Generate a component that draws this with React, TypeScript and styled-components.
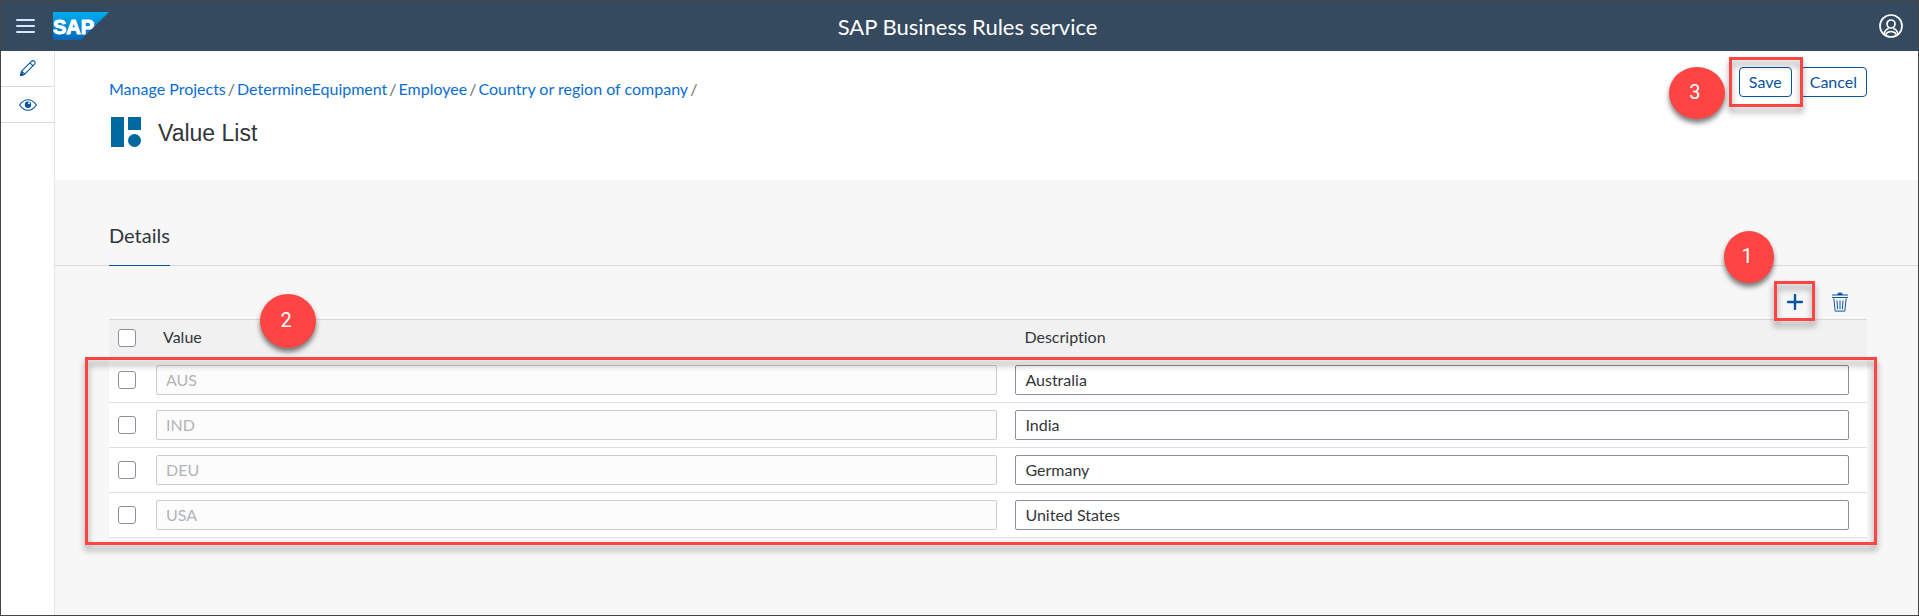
import React, { useState } from "react";
import styled, { createGlobalStyle } from "styled-components";

const GlobalStyle = createGlobalStyle`
  *, *::before, *::after { box-sizing: border-box; }
  body {
    margin: 0;
    font-family: Lato, "Liberation Sans", sans-serif;
    font-size: 16px;
    font-variant-ligatures: none;
    color: #32363a;
    background: #f7f7f7;
  }
  button, input { font: inherit; color: inherit; }
`;

const Frame = styled.div`
  display: flex;
  flex-direction: column;
  min-height: 100vh;
  border: 1px solid #444;
`;

const ShellBar = styled.header`
  display: grid;
  grid-template-columns: 1fr auto 1fr;
  align-items: center;
  height: 50px;
  padding: 0 14px;
  background: #354a5f;
  color: #fff;
`;

const ShellStart = styled.div`
  display: flex;
  align-items: center;
  gap: 16px;
`;

const ShellTitle = styled.h1`
  margin: 0;
  padding: 2px 0 0 16px;
  font-size: 22px;
  line-height: 24px;
  font-weight: 400;
`;

const IconButton = styled.button<{ $width: number; $height: number }>`
  display: flex;
  align-items: center;
  justify-content: center;
  width: ${(p) => p.$width}px;
  height: ${(p) => p.$height}px;
  padding: 0;
  border: 0;
  background: none;
  color: inherit;
  cursor: pointer;
`;

const ProfileSlot = styled.div`
  justify-self: end;
`;

const Body = styled.div`
  display: flex;
  flex: 1;
`;

const SideNav = styled.nav`
  width: 54px;
  flex: none;
  background: #fff;
  border-right: 1px solid #e5e5e5;
`;

const SideItem = styled.div`
  display: flex;
  justify-content: center;
  border-bottom: 1px solid #d9d9d9;
  color: #0854a0;
`;

const Main = styled.main`
  flex: 1;
  min-width: 0;
`;

const PageHeader = styled.div`
  display: flex;
  justify-content: space-between;
  align-items: flex-start;
  height: 129px;
  padding: 16px 51px 0 54px;
  background: #fff;
`;

const Breadcrumbs = styled.nav`
  display: flex;
  gap: 2px;
  margin-top: 11px;
  line-height: 22px;
  color: #6a6d70;
`;

const Crumb = styled.a`
  color: #0a6ed1;
  text-decoration: none;
`;

const TitleRow = styled.div`
  display: flex;
  align-items: center;
  gap: 17px;
  margin-top: 16px;
  padding-left: 2px;
`;

const PageTitle = styled.h2`
  margin: 0;
  padding-top: 2px;
  font: 400 23px/30px "Liberation Sans", sans-serif;
`;

const Actions = styled.div`
  display: flex;
  gap: 8px;
`;

const Anchor = styled.div`
  position: relative;
`;

const ActionButton = styled.button`
  height: 30px;
  padding: 0 9px 2px;
  border: 1px solid #0854a0;
  border-radius: 4px;
  background: #fff;
  color: #0854a0;
  cursor: pointer;
`;

const Highlight = styled.div<{ $inset: string }>`
  position: absolute;
  inset: ${(p) => p.$inset};
  z-index: 1;
  border: 3px solid #ff4444;
  filter: drop-shadow(0 5px 3px rgba(0, 0, 0, 0.4));
  pointer-events: none;
`;

const StepBadge = styled.div<{ $place: string; $size: string }>`
  position: absolute;
  inset: ${(p) => p.$place};
  z-index: 2;
  display: flex;
  align-items: center;
  justify-content: center;
  width: ${(p) => p.$size.split(" ")[0]};
  height: ${(p) => p.$size.split(" ")[1]};
  padding: 0 4px 2px 0;
  border-radius: 50%;
  background: #ff4444;
  color: #fff;
  font-family: Roboto, sans-serif;
  font-size: 20px;
  line-height: 24px;
  box-shadow: 0 4px 5px rgba(0, 0, 0, 0.5);
  pointer-events: none;
`;

const TabBar = styled.div`
  display: flex;
  padding: 34px 54px 0;
  border-bottom: 1px solid #d9d9d9;
`;

const Tab = styled.button`
  height: 52px;
  margin-bottom: -1px;
  padding: 0 0 10px;
  border: 0;
  border-bottom: 1px solid #0854a0;
  background: none;
  font-size: 20px;
  cursor: pointer;
`;

const Section = styled.section`
  padding: 14px 51px 0 54px;
`;

const Toolbar = styled.div`
  display: flex;
  justify-content: flex-end;
  gap: 9px;
  padding: 4px 9px 0;
  color: #0854a0;
`;

const TableWrap = styled.div`
  position: relative;
`;

const Table = styled.table`
  width: 100%;
  table-layout: fixed;
  border-collapse: separate;
  border-spacing: 0;
`;

const CheckColumn = styled.col`
  width: 39px;
`;

const ValueColumn = styled.col`
  width: 49%;
`;

const HeadCell = styled.th`
  height: 39px;
  padding: 0 0 4px 15px;
  border-top: 1px solid #d9d9d9;
  border-bottom: 1px solid #d9d9d9;
  background: #f1f1f1;
  font-weight: 400;
  text-align: left;
`;

const CheckHead = styled(HeadCell)`
  padding: 0 0 2px 9px;
`;

const Cell = styled.td<{ $pad: string }>`
  height: 45px;
  padding: ${(p) => p.$pad};
  border-bottom: 1px solid #e0e0e0;
  background: #fff;
`;

const CheckBox = styled.input`
  display: block;
  appearance: none;
  width: 18px;
  height: 18px;
  margin: 0;
  border: 1px solid #89919a;
  border-radius: 3px;
  background: #fff;
  &:checked {
    box-shadow: inset 0 0 0 4px #fff;
    background: #0854a0;
  }
`;

const Field = styled.input`
  display: block;
  width: 100%;
  height: 30px;
  padding: 0 9px 2px;
  border: 1px solid #89919a;
  border-radius: 2px;
  background: #fff;
  &:disabled {
    border-color: #c9cdd1;
    background: #fcfcfc;
    color: #b2b4b6;
  }
`;

const SapLogo = () => (
  <svg width="56" height="28" viewBox="0 0 56 28" role="img" aria-label="SAP">
    <defs>
      <linearGradient id="sap" x1="0" y1="0" x2="0" y2="1">
        <stop offset="0" stopColor="#00aeef" />
        <stop offset="1" stopColor="#0a66b8" />
      </linearGradient>
    </defs>
    <path d="M0 0h56L28 28H0z" fill="url(#sap)" />
    <text x="0" y="22" fill="#fff" stroke="#fff" strokeWidth="1" fontFamily="Liberation Sans, sans-serif" fontWeight="700" fontSize="20">
      SAP
    </text>
  </svg>
);

const MenuIcon = () => (
  <svg width="20" height="16" viewBox="0 0 20 16" stroke="#d1e8ff" strokeWidth="2" strokeLinecap="round" aria-hidden="true">
    <path d="M1 2h17M1 8h17M1 14h17" />
  </svg>
);

const ProfileIcon = () => (
  <svg width="24" height="24" viewBox="0 0 24 24" fill="none" stroke="#fff" strokeWidth="1.7" aria-hidden="true">
    <circle cx="12" cy="12" r="11" />
    <circle cx="12" cy="10" r="4" />
    <path d="M5 20c.6-3.600 3-5 4.700-5.500M19 20c-.6-3.600-3-5-4.700-5.500M6.500 20.500c1.500-2.200 3.200-3 5.500-3s4 .8 5.500 3" strokeWidth="1.500" />
  </svg>
);

const PencilIcon = () => (
  <svg width="18" height="18" viewBox="0 0 18 18" fill="none" stroke="currentColor" strokeWidth="1.1" strokeLinejoin="round" aria-hidden="true">
    <path d="M2.600 11.200 12.400 1.400c1-1 2-1 3 0s1 2 0 3L5.700 14.200 1.500 15.500zM11 2.800l3 3M2.600 11.200l3.100 3" />
    <path d="M1.500 15.500l.8-2.600 2 2z" fill="currentColor" />
  </svg>
);

const EyeIcon = () => (
  <svg width="18" height="12" viewBox="0 0 18 12" fill="none" stroke="currentColor" strokeWidth="1.1" aria-hidden="true">
    <path d="M.6 6C3 2.500 5.700.7 9 .7S15 2.500 17.400 6C15 9.500 12.300 11.300 9 11.300S3 9.500.6 6z" />
    <circle cx="9" cy="5.700" r="3.200" fill="currentColor" stroke="none" />
    <circle cx="10" cy="4.300" r="1" fill="#fff" stroke="none" />
  </svg>
);

const ListLogo = () => (
  <svg width="30" height="30" viewBox="0 0 30 30" fill="#0069a0" aria-hidden="true">
    <path d="M0 0h13v30H0zM17 0h13v13H17z" />
    <circle cx="23.500" cy="23.500" r="6.500" />
  </svg>
);

const PlusIcon = () => (
  <svg width="16" height="16" viewBox="0 0 16 16" stroke="currentColor" strokeWidth="2.400" strokeLinecap="round" aria-hidden="true">
    <path d="M8 1v14M1 8h14" />
  </svg>
);

const TrashIcon = () => (
  <svg width="16" height="20" viewBox="0 0 16 20" fill="none" stroke="currentColor" aria-hidden="true">
    <path d="M5.500 2.500c0-2 5-2 5 0z" fill="currentColor" />
    <path d="M0 3h16M0 5.500h16" strokeWidth="1.200" />
    <path d="M1.800 6.500l1.400 12.600h9.600l1.400-12.600M5 8.500l.6 8.500M8 8.500V17M11 8.500l-.6 8.500" strokeWidth="1" />
  </svg>
);

const crumbs = ["Manage Projects", "DetermineEquipment", "Employee", "Country or region of company"];

const initialRows = [
  { value: "AUS", description: "Australia" },
  { value: "IND", description: "India" },
  { value: "DEU", description: "Germany" },
  { value: "USA", description: "United States" },
];

export default function App() {
  const [rows, setRows] = useState(initialRows);

  const describe = (index: number, description: string) =>
    setRows(rows.map((row, i) => (i === index ? { ...row, description } : row)));

  return (
    <Frame>
      <GlobalStyle />
      <ShellBar>
        <ShellStart>
          <IconButton $width={22} $height={32} aria-label="Menu"><MenuIcon /></IconButton>
          <SapLogo />
        </ShellStart>
        <ShellTitle>SAP Business Rules service</ShellTitle>
        <ProfileSlot>
          <IconButton $width={26} $height={32} aria-label="Profile"><ProfileIcon /></IconButton>
        </ProfileSlot>
      </ShellBar>
      <Body>
        <SideNav aria-label="Tools">
          <SideItem><IconButton $width={52} $height={35} aria-label="Edit"><PencilIcon /></IconButton></SideItem>
          <SideItem><IconButton $width={52} $height={35} aria-label="View"><EyeIcon /></IconButton></SideItem>
        </SideNav>
        <Main>
          <PageHeader>
            <div>
              <Breadcrumbs aria-label="Breadcrumb">
                {crumbs.map((crumb) => (
                  <React.Fragment key={crumb}>
                    <Crumb href="#">{crumb}</Crumb>
                    <span>/</span>
                  </React.Fragment>
                ))}
              </Breadcrumbs>
              <TitleRow>
                <ListLogo />
                <PageTitle>Value List</PageTitle>
              </TitleRow>
            </div>
            <Actions>
              <Anchor>
                <ActionButton>Save</ActionButton>
                <Highlight $inset="-10px -11px -10px -10px" />
                <StepBadge $place="0 auto auto -70px" $size="56px 52px">3</StepBadge>
              </Anchor>
              <ActionButton>Cancel</ActionButton>
            </Actions>
          </PageHeader>
          <TabBar role="tablist">
            <Tab role="tab" aria-selected="true">Details</Tab>
          </TabBar>
          <Section>
            <Toolbar>
              <Anchor>
                <IconButton $width={36} $height={35} aria-label="Add"><PlusIcon /></IconButton>
                <Highlight $inset="-3px -2px -2px -3px" />
                <StepBadge $place="-53px auto auto -53px" $size="50px 52px">1</StepBadge>
              </Anchor>
              <IconButton $width={36} $height={35} aria-label="Delete"><TrashIcon /></IconButton>
            </Toolbar>
            <TableWrap>
              <Table>
                <colgroup>
                  <CheckColumn />
                  <ValueColumn />
                  <col />
                </colgroup>
                <thead>
                  <tr>
                    <CheckHead><CheckBox type="checkbox" aria-label="Select all" /></CheckHead>
                    <HeadCell>Value</HeadCell>
                    <HeadCell>Description</HeadCell>
                  </tr>
                </thead>
                <tbody>
                  {rows.map((row, i) => (
                    <tr key={row.value}>
                      <Cell $pad="0 0 0 9px"><CheckBox type="checkbox" aria-label={`Select ${row.value}`} /></Cell>
                      <Cell $pad="0 12px 0 8px"><Field disabled value={row.value} aria-label="Value" /></Cell>
                      <Cell $pad="0 18px 0 6px">
                        <Field value={row.description} aria-label="Description" onChange={(e) => describe(i, e.target.value)} />
                      </Cell>
                    </tr>
                  ))}
                </tbody>
              </Table>
              <Highlight $inset="38px -10px -7px -24px" />
              <StepBadge $place="-25px auto auto 151px" $size="56px 54px">2</StepBadge>
            </TableWrap>
          </Section>
        </Main>
      </Body>
    </Frame>
  );
}
